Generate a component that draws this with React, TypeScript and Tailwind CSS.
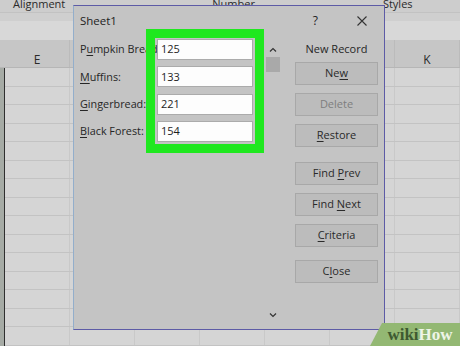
import type { ReactNode } from 'react'

const COLS = ['E', 'F', 'G', 'H', 'I', 'J', 'K']
const ROWS = Array.from({ length: 15 }, (_, i) => i)

const FIELDS: { pre: string; key: string; post: string; value: string }[] = [
  { pre: 'P', key: 'u', post: 'mpkin Bread:', value: '125' },
  { pre: '', key: 'M', post: 'uffins:', value: '133' },
  { pre: '', key: 'G', post: 'ingerbread:', value: '221' },
  { pre: '', key: 'B', post: 'lack Forest:', value: '154' }
]

function Btn({ children, disabled, className = '' }: { children: ReactNode; disabled?: boolean; className?: string }) {
  return (
    <div
      className={
        'h-[23px] flex items-center justify-center bg-[#bcbcbc] border border-[#a8a8a8] text-[11px] ' +
        (disabled ? 'text-[#7e7e7e] ' : 'text-[#2a2a2a] ') +
        className
      }
    >
      <span className="whitespace-pre">{children}</span>
    </div>
  )
}

function U({ children }: { children: ReactNode }) {
  return <span className="underline underline-offset-[2px] decoration-[1px]">{children}</span>
}

function Chevron({ up }: { up?: boolean }) {
  return (
    <svg width="8" height="5" viewBox="0 0 8 5" className="block">
      <polyline
        points={up ? '1,4.5 4,1.5 7,4.5' : '1,0.5 4,3.5 7,0.5'}
        fill="none"
        stroke="#333"
        strokeWidth="1.2"
      />
    </svg>
  )
}

export default function App() {
  return (
    <div className="relative w-[460px] h-[346px] overflow-hidden bg-[#d5d5d5] font-['Open_Sans',sans-serif] text-[#2a2a2a]">
      {/* ribbon labels */}
      <div className="h-[12px] bg-[#cdcdcd] flex items-start text-[11px] leading-[12px] overflow-hidden">
        <span className="ml-[13px] -mt-[2px]">Alignment</span>
        <span className="ml-[147px] -mt-[2px]">Number</span>
        <span className="ml-[128px] -mt-[2px]">Styles</span>
      </div>
      <div className="h-[28px] bg-[#d8d8d8] border-t border-[#c2c2c2]">
        <div className="h-[8px] bg-[#cfcfcf]" />
      </div>

      {/* column headers */}
      <div className="h-[28px] flex bg-[#c6c6c6] border-b border-[#b6b6b6]">
        <div className="w-[10px]" />
        {COLS.map(c => (
          <div key={c} className="w-[65px] shrink-0 flex items-end justify-center leading-[14px] text-[12px] border-r border-[#bbbbbb]">
            {c}
          </div>
        ))}
      </div>

      {/* grid */}
      <div className="flex">
        <div className="w-[10px] h-[280px] bg-[#a6aba5] border-r border-[#2f2f2f]" />
        <div className="flex-1">
          {ROWS.map(r => (
            <div key={r} className="h-[18.5px] flex border-b border-[#c3c3c3]">
              {COLS.map(c => (
                <div key={c} className="w-[65px] shrink-0 border-r border-[#c9c9c9]" />
              ))}
            </div>
          ))}
        </div>
      </div>

      {/* data form dialog */}
      <div className="absolute left-[73px] top-[5px] w-[312px] h-[325px] bg-[#c4c4c4] border border-[#5d5ba6] border-l-[#93aecb] flex flex-col">
        <div className="h-[29px] flex items-center pl-[6px] text-[11.5px] text-[#222] shrink-0">
          <span>Sheet1</span>
          <span className="ml-auto mr-[39px] text-[12px]">?</span>
          <svg width="10" height="10" viewBox="0 0 10 10" className="mr-[17px]">
            <path d="M0.5 0.5 L9.5 9.5 M9.5 0.5 L0.5 9.5" stroke="#333" strokeWidth="1.1" />
          </svg>
        </div>

        <div className="flex flex-1 pt-[4px]">
          {/* fields */}
          <div className="ml-[6px] w-[173px] flex flex-col gap-[6.3px]">
            {FIELDS.map(f => (
              <div key={f.value} className="h-[21px] flex items-center">
                <div className="w-[77px] whitespace-nowrap overflow-hidden text-[10.8px] text-[#262626]">
                  {f.pre}
                  <U>{f.key}</U>
                  {f.post}
                </div>
                <div className="w-[96px] h-[21px] bg-[#fdfdfd] border border-[#ababab] flex items-center pl-[3px] text-[11px] text-[#1e1e1e]">
                  {f.value}
                </div>
              </div>
            ))}
          </div>

          {/* scrollbar */}
          <div className="ml-[13px] w-[14px] flex flex-col items-center pb-[11px]">
            <div className="mt-[8px]">
              <Chevron up />
            </div>
            <div className="mt-[5px] w-[14px] h-[15px] bg-[#a9a9a9]" />
            <div className="flex-1" />
            <Chevron />
          </div>

          {/* buttons */}
          <div className="ml-[15px] w-[83px] flex flex-col">
            <div className="mt-[3px] h-[14px] flex items-center justify-center text-[11px] text-[#262626]">New Record</div>
            <Btn className="mt-[6px]">
              Ne<U>w</U>
            </Btn>
            <Btn disabled className="mt-[8px]">
              Delete
            </Btn>
            <Btn className="mt-[8px]">
              <U>R</U>estore
            </Btn>
            <Btn className="mt-[15px]">
              {'Find '}<U>P</U>rev
            </Btn>
            <Btn className="mt-[8px]">
              {'Find '}<U>N</U>ext
            </Btn>
            <Btn className="mt-[8px]">
              <U>C</U>riteria
            </Btn>
            <Btn className="mt-[13px]">
              C<U>l</U>ose
            </Btn>
          </div>
        </div>

        {/* green highlight */}
        <div className="absolute left-[72px] top-[23px] w-[118px] h-[124px] border-[9px] border-[#1fe81f]" />
      </div>

      {/* watermark */}
      <div className="absolute right-0 bottom-0 w-[90px] h-[23px] bg-[#93b873] [clip-path:polygon(12px_0,100%_0,100%_100%,0_100%)] flex items-center justify-center pl-[10px] font-['Liberation_Serif',serif] font-bold text-[17px] leading-none">
        <span className="text-[#3e5a31]">wiki</span>
        <span className="text-[#eef4e6]">How</span>
      </div>
    </div>
  )
}
